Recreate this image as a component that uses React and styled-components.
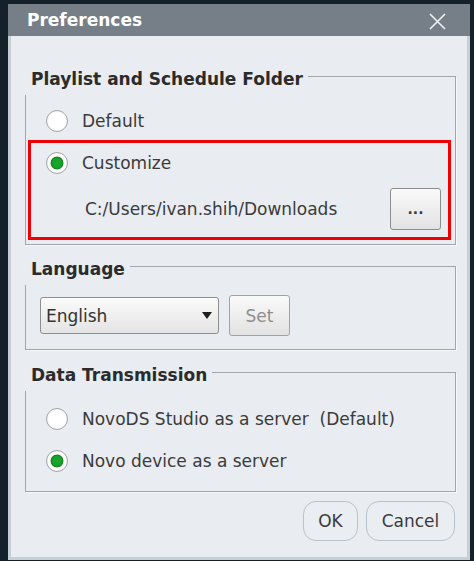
import styled, { createGlobalStyle } from "styled-components";

const GlobalStyle = createGlobalStyle`
  html, body {
    margin: 0;
    padding: 0;
    background: #14212a;
  }
  body {
    font-family: "DejaVu Sans", Verdana, sans-serif;
  }
  * {
    box-sizing: border-box;
  }
`;

const Dialog = styled.div`
  margin: 4px 0 0 8px;
  width: 462px;
  height: 556px;
  background: #c6ced6;
  padding: 0 3px 3px 3px;
  display: flex;
  flex-direction: column;
`;

const TitleBar = styled.div`
  height: 32px;
  margin: 0 -3px;
  background: #767f88;
  display: flex;
  align-items: center;
  justify-content: space-between;
  padding: 0 24px 0 19px;
  color: #ffffff;
  font-weight: bold;
  font-size: 17px;
  svg {
    margin-top: 2px;
  }
`;

const Body = styled.div`
  flex: 1;
  background: #e9ecf0;
  padding: 0 11px 0 14px;
  display: flex;
  flex-direction: column;
`;

const GroupBox = styled.div`
  margin-top: ${(p) => p.$top}px;
  border: 1px solid #a2a6aa;
  box-shadow: 1px 1px 0 #f7f8fa;
  padding-bottom: ${(p) => p.$bottom}px;
  display: flex;
  flex-direction: column;
`;

const GroupTitle = styled.div`
  width: fit-content;
  margin: -11px 0 0 -1px;
  padding: 0 5px 3px 6px;
  line-height: 26px;
  background: #e9ecf0;
  font-weight: bold;
  font-size: 17px;
  color: #2b2b2b;
`;

const RadioRow = styled.label`
  display: flex;
  align-items: center;
  gap: 14px;
  height: ${(p) => p.$h || 42}px;
  padding-top: ${(p) => p.$pt || 0}px;
  padding-left: ${(p) => p.$indent || 0}px;
  font-size: 17px;
  color: #3b3b3b;
`;

const RadioMark = styled.span`
  flex-shrink: 0;
  width: 22px;
  height: 22px;
  border-radius: 50%;
  border: 1.5px solid #a4a4a4;
  background: ${(p) =>
    p.$checked
      ? "radial-gradient(circle, #1ea62e 0, #16a026 5px, #0c7d1a 6px, #ffffff 6.8px, #f3f3f3 100%)"
      : "radial-gradient(circle, #ffffff 55%, #ececec 100%)"};
`;

const Highlight = styled.div`
  margin: 0 4px 0 2px;
  border: 3px solid #f00000;
  padding: 0 7px 7px 15px;
`;

const PathRow = styled.div`
  margin-top: 5px;
  height: 42px;
  display: flex;
  align-items: center;
  justify-content: space-between;
  padding-left: 39px;
  font-size: 17px;
  color: #3b3b3b;
`;

const SquareButton = styled.button`
  width: ${(p) => p.$w}px;
  height: ${(p) => p.$h}px;
  border: 1px solid ${(p) => (p.$disabled ? "#a2a2a2" : "#8c8c8c")};
  border-radius: 3px;
  background: linear-gradient(#fafafa, #e2e2e2);
  font-family: inherit;
  font-size: ${(p) => p.$fs || 17}px;
  font-weight: ${(p) => p.$weight || "normal"};
  color: ${(p) => (p.$disabled ? "#8e8e8e" : "#3b3b3b")};
  padding: 0;
  display: flex;
  align-items: center;
  justify-content: center;
`;

const LangRow = styled.div`
  margin-top: 10px;
  height: 41px;
  display: flex;
  align-items: center;
  gap: 10px;
  padding-left: 14px;
`;

const Select = styled.div`
  width: 179px;
  height: 37px;
  border: 1px solid #8e8e8e;
  border-radius: 3px;
  background: linear-gradient(#fbfbfb, #e4e4e4);
  display: flex;
  align-items: center;
  justify-content: space-between;
  padding: 0 6px 0 5px;
  font-size: 17px;
  color: #333333;
`;

const RadioList = styled.div`
  margin-top: 7px;
  display: flex;
  flex-direction: column;
`;

const Footer = styled.div`
  margin-top: 9px;
  display: flex;
  justify-content: flex-end;
  gap: 8px;
  padding-right: 1px;
`;

const RoundButton = styled.button`
  width: ${(p) => p.$w}px;
  height: 40px;
  border: 1px solid #b9c2cb;
  border-radius: 13px;
  background: #eaedf1;
  font-family: inherit;
  font-size: 17px;
  color: #3b3b3b;
  padding: 0;
`;

const CloseIcon = () => (
  <svg width="17" height="17" viewBox="0 0 17 17">
    <path d="M1 1 L16 16 M16 1 L1 16" stroke="#eef0f2" strokeWidth="1.6" fill="none" />
  </svg>
);

const Arrow = () => (
  <svg width="10" height="7" viewBox="0 0 10 7">
    <path d="M0 0 H10 L5 7 Z" fill="#1e1e1e" />
  </svg>
);

const Radio = ({ checked, children, ...rest }) => (
  <RadioRow {...rest}>
    <RadioMark $checked={checked} />
    <span>{children}</span>
  </RadioRow>
);

export default function App() {
  return (
    <>
      <GlobalStyle />
      <Dialog>
        <TitleBar>
          <span>Preferences</span>
          <CloseIcon />
        </TitleBar>
        <Body>
          <GroupBox $top={40} $bottom={4}>
            <GroupTitle>Playlist and Schedule Folder</GroupTitle>
            <Radio $h={45} $pt={7} $indent={20}>
              Default
            </Radio>
            <Highlight>
              <Radio checked $h={40}>
                Customize
              </Radio>
              <PathRow>
                <span>C:/Users/ivan.shih/Downloads</span>
                <SquareButton $w={51} $h={42} $fs={14} $weight="bold">
                  ...
                </SquareButton>
              </PathRow>
            </Highlight>
          </GroupBox>

          <GroupBox $top={21} $bottom={13}>
            <GroupTitle>Language</GroupTitle>
            <LangRow>
              <Select>
                <span>English</span>
                <Arrow />
              </Select>
              <SquareButton $w={61} $h={41} $disabled>
                Set
              </SquareButton>
            </LangRow>
          </GroupBox>

          <GroupBox $top={22} $bottom={9}>
            <GroupTitle>Data Transmission</GroupTitle>
            <RadioList>
              <Radio $indent={20}>NovoDS Studio as a server&nbsp; (Default)</Radio>
              <Radio checked $indent={20}>
                Novo device as a server
              </Radio>
            </RadioList>
          </GroupBox>

          <Footer>
            <RoundButton $w={55}>OK</RoundButton>
            <RoundButton $w={89}>Cancel</RoundButton>
          </Footer>
        </Body>
      </Dialog>
    </>
  );
}
